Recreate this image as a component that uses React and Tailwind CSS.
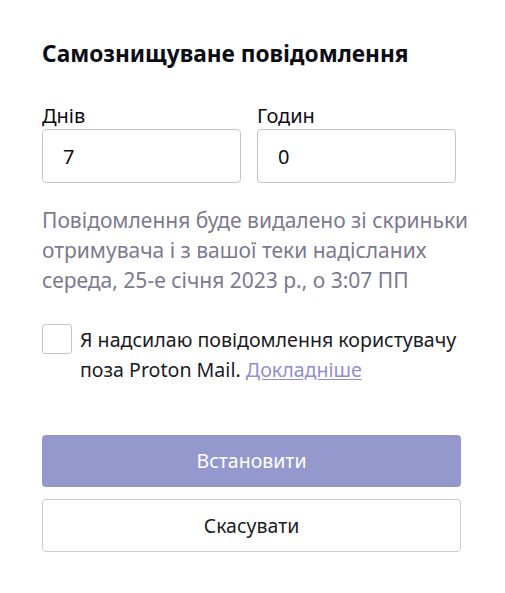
import { useState } from "react";

export default function App() {
  const [days, setDays] = useState("7");
  const [hours, setHours] = useState("0");
  const [external, setExternal] = useState(false);

  return (
    <div className="min-h-screen bg-white font-['Noto_Sans','Open_Sans',sans-serif] text-[#0c0c14]">
      <div className="w-[419px] ml-[42px] pt-[39px]">
        {/* Title */}
        <h2 className="text-[22.7px] leading-[30px] font-bold">
          Самознищуване повідомлення
        </h2>

        {/* Days / hours */}
        <div className="mt-[34px] flex gap-4 w-[414px]">
          <label className="flex-1">
            <span className="block text-[20px] leading-[26px]">Днів</span>
            <input
              value={days}
              onChange={(e) => setDays(e.target.value)}
              className="block w-full h-[54px] rounded-[4px] border border-[#c6c3d9] px-5 text-[20px] outline-none"
            />
          </label>
          <label className="flex-1">
            <span className="block text-[20px] leading-[26px]">Годин</span>
            <input
              value={hours}
              onChange={(e) => setHours(e.target.value)}
              className="block w-full h-[54px] rounded-[4px] border border-[#c6c3d9] px-5 text-[20px] outline-none"
            />
          </label>
        </div>

        {/* Info */}
        <p className="mt-[22px] text-[21px] leading-[30px] text-[#7c798f] whitespace-nowrap">
          Повідомлення буде видалено зі скриньки
          <br />
          отримувача і з вашої теки надісланих
          <br />
          середа, 25-е січня 2023 р., о 3:07 ПП
        </p>

        {/* External checkbox */}
        <div className="mt-[29px] flex items-start gap-2">
          <button
            type="button"
            onClick={() => setExternal(!external)}
            className="w-[30px] h-[30px] shrink-0 rounded-[3px] border border-[#c6c3d9] bg-white"
          />
          <p className="mt-[1px] text-[19.6px] leading-[30px] text-[#1b1b1f] whitespace-nowrap">
            Я надсилаю повідомлення користувачу
            <br />
            поза Proton Mail.{" "}
            <a href="#" className="text-[#8f8fcf] underline underline-offset-2">
              Докладніше
            </a>
          </p>
        </div>

        {/* Actions */}
        <div className="mt-[50px] flex flex-col gap-3">
          <button
            type="button"
            className="h-[52px] w-full rounded-[4px] bg-[#9598cd] text-[19.5px] text-white"
          >
            Встановити
          </button>
          <button
            type="button"
            className="h-[53px] w-full rounded-[4px] border border-[#cbc9d8] bg-white text-[19.5px] text-[#1b1b1f]"
          >
            Скасувати
          </button>
        </div>
      </div>
    </div>
  );
}
